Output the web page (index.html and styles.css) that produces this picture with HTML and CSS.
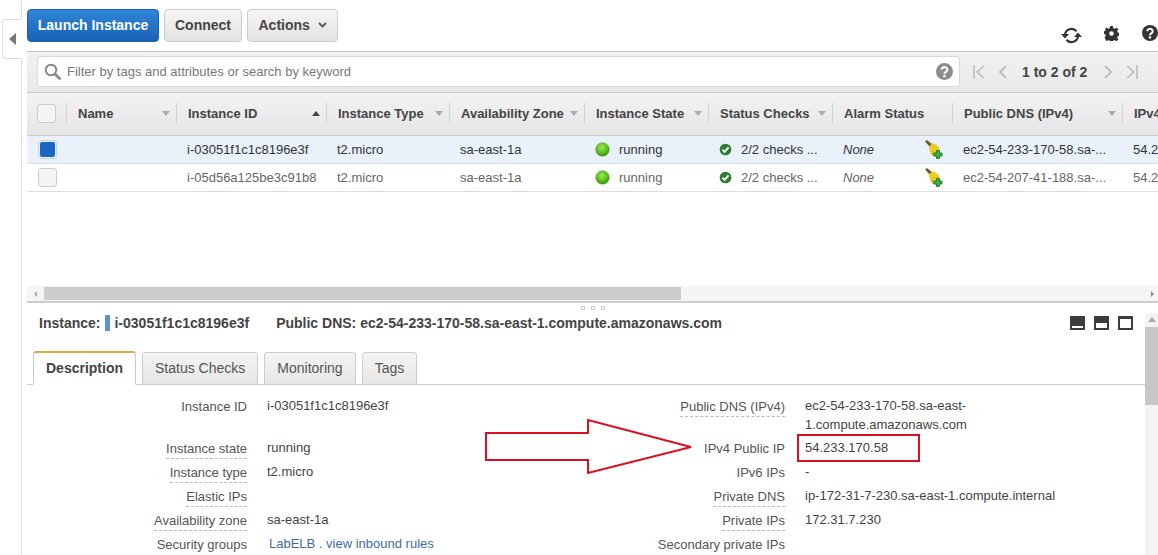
FILE: index.html
```html
<!DOCTYPE html>
<html lang="en">
<head>
    <meta charset="UTF-8">
    <title>EC2 Instances</title>
    <link rel="stylesheet" href="styles.css">
</head>
<body>

<svg class="defs" width="0" height="0">
    <symbol id="i-dot" viewBox="0 0 16 16">
        <defs>
            <radialGradient id="dotFill" cx="45%" cy="35%" r="65%">
                <stop offset="0" stop-color="#9be85a"/>
                <stop offset="0.6" stop-color="#5fc31c"/>
                <stop offset="1" stop-color="#3a8f12"/>
            </radialGradient>
        </defs>
        <circle cx="8" cy="8" r="7.2" fill="url(#dotFill)" stroke="#4d9a2a" stroke-width="0.6"/>
    </symbol>
    <symbol id="i-check" viewBox="0 0 14 14">
        <circle cx="7" cy="7" r="6.3" fill="#2f7d32"/>
        <path d="M3.8 7.2l2.3 2.4 4.2-4.8" fill="none" stroke="#fff" stroke-width="2"/>
    </symbol>
    <symbol id="i-broom" viewBox="0 0 18 20">
        <path d="M0 1.500l2-1.500 5 4-2 3z" fill="#7d5a20"/>
        <path d="M4 6.500l4-3.500 6 4 1 5-3 5-4-1-3-4z" fill="#ecca1e"/>
        <path d="M6.500 13l2 3M8.500 12l2 4" stroke="#bd9a14" stroke-width="1"/>
        <path d="M11.500 10.500h3v2.500h2.500v3h-2.500v2.500h-3v-2.500H9v-3h2.500z" fill="#37b34a" stroke="#0e6b12" stroke-width="0.8"/>
    </symbol>
</svg>

<div class="page">
    <div class="side">
        <div class="side-tab"><span class="tri-left"></span></div>
    </div>

    <div class="main">
        <div class="toolbar">
            <button class="btn btn-primary">Launch Instance</button>
            <button class="btn">Connect</button>
            <button class="btn btn-actions">Actions
                <svg width="9" height="6" viewBox="0 0 9 6"><path d="M1 1l3.500 3.500L8 1" fill="none" stroke="#555" stroke-width="1.800"/></svg>
            </button>
            <div class="top-icons">
                <svg class="ic-refresh" width="21" height="17" viewBox="0 0 21 17">
                    <path d="M4 8a6.500 6.500 0 0 1 11.500-3.800" fill="none" stroke="#333" stroke-width="2.200"/>
                    <path d="M17 9a6.500 6.500 0 0 1-11.500 3.800" fill="none" stroke="#333" stroke-width="2.200"/>
                    <path d="M0 7h8l-4 4.500zM13 10h8l-4-4.500z" fill="#333"/>
                </svg>
                <svg class="ic-gear" width="15" height="15" viewBox="0 0 16 16">
                    <path d="M6.500 0h3l.4 2.300 1.500.6L13.300 1.500l2.100 2.100-1.400 1.900.6 1.500 2.400.5v3l-2.400.4-.6 1.500 1.400 1.900-2.100 2.100-1.900-1.400-1.500.6-.4 2.300h-3l-.4-2.300-1.500-.6-1.900 1.400L.6 12.300 2 10.400l-.6-1.500L-.1 8.500v-3l1.500-.4.6-1.500L.6 3.600 2.700 1.500l1.900 1.400 1.500-.6z" fill="#333"/>
                    <circle cx="8" cy="8" r="2.400" fill="#fff"/>
                </svg>
                <svg class="ic-help" width="16" height="16" viewBox="0 0 16 16">
                    <circle cx="8" cy="8" r="8" fill="#333"/>
                    <path d="M5.300 6.200a2.700 2.400 0 1 1 4.300 2c-1 .7-1.600 1-1.600 2.100" fill="none" stroke="#fff" stroke-width="2"/>
                    <rect x="6.900" y="11.300" width="2.200" height="2.200" fill="#fff"/>
                </svg>
            </div>
        </div>

        <div class="filter-bar">
            <div class="search">
                <svg width="18" height="18" viewBox="0 0 18 18">
                    <circle cx="7" cy="7" r="5.300" fill="none" stroke="#8a8a8a" stroke-width="2"/>
                    <path d="M11 11l5.500 5.500" stroke="#8a8a8a" stroke-width="2.600"/>
                </svg>
                <span class="search-text">Filter by tags and attributes or search by keyword</span>
                <svg class="search-help" width="17" height="17" viewBox="0 0 16 16">
                    <circle cx="8" cy="8" r="8" fill="#8c8c8c"/>
                    <path d="M5.300 6.200a2.700 2.400 0 1 1 4.300 2c-1 .7-1.600 1-1.600 2.100" fill="none" stroke="#fff" stroke-width="2"/>
                    <rect x="6.900" y="11.300" width="2.200" height="2.200" fill="#fff"/>
                </svg>
            </div>
            <div class="pager">
                <svg width="12" height="14" viewBox="0 0 12 14"><path d="M1 0v14M11 1L4 7l7 6" fill="none" stroke="#bbb" stroke-width="1.600"/></svg>
                <svg class="pg-prev" width="9" height="14" viewBox="0 0 9 14"><path d="M8 1L2 7l6 6" fill="none" stroke="#bbb" stroke-width="1.800"/></svg>
                <span class="pg-text">1 to 2 of 2</span>
                <svg class="pg-next" width="9" height="14" viewBox="0 0 9 14"><path d="M1 1l6 6-6 6" fill="none" stroke="#bbb" stroke-width="1.800"/></svg>
                <svg class="pg-last" width="12" height="14" viewBox="0 0 12 14"><path d="M11 0v14M1 1l7 6-7 6" fill="none" stroke="#bbb" stroke-width="1.600"/></svg>
            </div>
        </div>

        <div class="table-wrap">
            <table class="grid">
                <colgroup>
                    <col class="c-check"><col class="c-name"><col class="c-id"><col class="c-type"><col class="c-az">
                    <col class="c-state"><col class="c-status"><col class="c-alarm"><col class="c-dns"><col class="c-ip">
                </colgroup>
                <thead>
                    <tr>
                        <th class="th-check"><span class="check"></span></th>
                        <th><div class="th-in">Name<span class="arrow"></span></div></th>
                        <th><div class="th-in">Instance ID<span class="arrow arrow-up"></span></div></th>
                        <th><div class="th-in">Instance Type<span class="arrow"></span></div></th>
                        <th><div class="th-in">Availability Zone<span class="arrow"></span></div></th>
                        <th><div class="th-in">Instance State<span class="arrow"></span></div></th>
                        <th><div class="th-in">Status Checks<span class="arrow"></span></div></th>
                        <th><div class="th-in">Alarm Status</div></th>
                        <th><div class="th-in">Public DNS (IPv4)<span class="arrow"></span></div></th>
                        <th><div class="th-in">IPv4 Public IP</div></th>
                    </tr>
                </thead>
                <tbody>
                    <tr class="selected">
                        <td class="td-check"><span class="check check-on"></span></td>
                        <td></td>
                        <td>i-03051f1c1c8196e3f</td>
                        <td>t2.micro</td>
                        <td>sa-east-1a</td>
                        <td><div class="cell-icon"><svg class="dot" width="15" height="15"><use href="#i-dot"/></svg>running</div></td>
                        <td><div class="cell-icon"><svg class="tick" width="13" height="13"><use href="#i-check"/></svg>2/2 checks ...</div></td>
                        <td><div class="cell-alarm"><em>None</em><svg width="18" height="20"><use href="#i-broom"/></svg></div></td>
                        <td>ec2-54-233-170-58.sa-...</td>
                        <td>54.233.170.58</td>
                    </tr>
                    <tr>
                        <td class="td-check"><span class="check"></span></td>
                        <td></td>
                        <td>i-05d56a125be3c91b8</td>
                        <td>t2.micro</td>
                        <td>sa-east-1a</td>
                        <td><div class="cell-icon"><svg class="dot" width="15" height="15"><use href="#i-dot"/></svg>running</div></td>
                        <td><div class="cell-icon"><svg class="tick" width="13" height="13"><use href="#i-check"/></svg>2/2 checks ...</div></td>
                        <td><div class="cell-alarm"><em>None</em><svg width="18" height="20"><use href="#i-broom"/></svg></div></td>
                        <td>ec2-54-207-41-188.sa-...</td>
                        <td>54.207.41.188</td>
                    </tr>
                </tbody>
            </table>
        </div>

        <div class="hscroll">
            <span class="tri-small tri-small-left"></span>
            <div class="hscroll-thumb"></div>
            <span class="tri-small tri-small-right"></span>
        </div>

        <div class="lower">
            <div class="lower-body">
                <div class="drag-dots"><i></i><i></i><i></i></div>
                <div class="inst-head">
                    <span>Instance:</span>
                    <span class="inst-mark"></span>
                    <span>i-03051f1c1c8196e3f</span>
                    <span class="inst-dns">Public DNS: ec2-54-233-170-58.sa-east-1.compute.amazonaws.com</span>
                    <div class="panes">
                        <span class="pane pane-s"></span>
                        <span class="pane pane-m"></span>
                        <span class="pane pane-l"></span>
                    </div>
                </div>

                <div class="tabs">
                    <div class="tab tab-on">Description</div>
                    <div class="tab">Status Checks</div>
                    <div class="tab">Monitoring</div>
                    <div class="tab">Tags</div>
                </div>

                <div class="details">
                    <dl class="col col-left">
                        <dt>Instance ID</dt><dd>i-03051f1c1c8196e3f</dd>
                        <dt><span class="dash">Instance state</span></dt><dd>running</dd>
                        <dt><span class="dash">Instance type</span></dt><dd>t2.micro</dd>
                        <dt><span class="dash">Elastic IPs</span></dt><dd></dd>
                        <dt><span class="dash">Availability zone</span></dt><dd>sa-east-1a</dd>
                        <dt>Security groups</dt><dd class="links"><a>LabELB</a> . <a class="inbound">view inbound rules</a></dd>
                    </dl>
                    <dl class="col col-right">
                        <dt><span class="dash">Public DNS (IPv4)</span></dt><dd>ec2-54-233-170-58.sa-east-<br>1.compute.amazonaws.com</dd>
                        <dt>IPv4 Public IP</dt><dd>54.233.170.58</dd>
                        <dt>IPv6 IPs</dt><dd>-</dd>
                        <dt><span class="dash">Private DNS</span></dt><dd>ip-172-31-7-230.sa-east-1.compute.internal</dd>
                        <dt><span class="dash">Private IPs</span></dt><dd>172.31.7.230</dd>
                        <dt>Secondary private IPs</dt><dd></dd>
                    </dl>
                </div>
            </div>
            <div class="vscroll">
                <span class="tri-up"></span>
                <div class="vscroll-thumb"></div>
            </div>
        </div>

        <!-- red annotation drawn over the screenshot -->
        <svg class="note-arrow" width="212" height="57" viewBox="0 0 212 57">
            <path d="M1 14H103V1L206 28 103 54V41H1z" fill="#fff" stroke="#d9101f" stroke-width="2"/>
        </svg>
        <div class="note-box"></div>
    </div>
</div>

</body>
</html>
```

FILE: styles.css
```css
html, body {
    margin: 0;
    height: 100%;
    overflow: hidden;
    background: #fff;
}
body {
    font-family: "Liberation Sans", Arial, sans-serif;
    font-size: 13px;
    color: #444;
}
.defs {
    position: absolute;
}
.page {
    display: flex;
    height: 555px;
}
.side {
    flex: none;
    width: 21px;
    border-right: 1px solid #ddd;
}
.side-tab {
    display: flex;
    align-items: center;
    justify-content: center;
    box-sizing: border-box;
    width: 20px;
    height: 40px;
    margin: 19px -1px 0 2px;
    border: 1px solid #ddd;
    border-right: 1px solid #fff;
    border-radius: 3px 0 0 3px;
    background: #fff;
}
.tri-left {
    border: 6px solid transparent;
    border-left: 0;
    border-right: 7px solid #777;
}
.main {
    flex: 1;
    min-width: 0;
    margin-left: 5px;
    position: relative;
}

/* top buttons */
.toolbar {
    display: flex;
    align-items: flex-start;
    gap: 5px;
    box-sizing: border-box;
    height: 51px;
    padding-top: 9px;
}
.btn {
    box-sizing: border-box;
    height: 33px;
    padding: 0 10px 2px;
    border: 1px solid #ccc;
    border-radius: 4px;
    background: linear-gradient(#f6f6f6, #e2e2e2);
    font-family: inherit;
    font-size: 14px;
    font-weight: bold;
    color: #444;
}
.btn-primary {
    width: 132px;
    padding: 0 0 2px;
    border-color: #1b62b0;
    background: linear-gradient(#2f86d6, #1a62b5);
    color: #fff;
}
.btn-actions {
    padding: 0 10.5px 2px;
}
.btn-actions svg {
    margin-left: 4px;
    vertical-align: 2px;
}
.top-icons {
    display: flex;
    align-items: flex-start;
    margin-left: auto;
    padding-top: 16px;
}
.ic-refresh {
    margin-top: 2px;
}
.ic-gear {
    margin-left: 22px;
    margin-top: 1px;
}
.ic-help {
    margin-left: 23px;
}

/* filter row */
.filter-bar {
    display: flex;
    align-items: flex-start;
    box-sizing: border-box;
    height: 42px;
    padding: 4px 0 0 10px;
    border-top: 1px solid #c9c9c9;
    border-bottom: 1px solid #c9c9c9;
    background: linear-gradient(#f1f1f1, #e9e9e9);
}
.search {
    display: flex;
    align-items: center;
    box-sizing: border-box;
    width: 923px;
    height: 31px;
    padding: 0 6px;
    border: 1px solid #d8d8d8;
    border-radius: 3px;
    background: #fff;
}
.search-text {
    margin-left: 5px;
    color: #777;
}
.search-help {
    margin-left: auto;
}
.pager {
    display: flex;
    align-items: center;
    height: 31px;
    margin-left: 13px;
}
.pg-prev {
    margin-left: 13px;
}
.pg-text {
    margin: 0 17px 0 15px;
    font-size: 14px;
    font-weight: bold;
}
.pg-next {
    margin-right: 13px;
}

/* instances table */
.table-wrap {
    height: 193px;
    overflow: hidden;
}
.grid {
    table-layout: fixed;
    width: 1195px;
    border-collapse: collapse;
}
.c-check { width: 39px; }
.c-name { width: 110px; }
.c-id { width: 150px; }
.c-type { width: 123px; }
.c-az { width: 135px; }
.c-state { width: 124px; }
.c-status { width: 124px; }
.c-alarm { width: 120px; }
.c-dns { width: 170px; }
.c-ip { width: 100px; }
.grid th {
    height: 40px;
    padding: 0 0 2px;
    border-bottom: 1px solid #ccc;
    background: linear-gradient(#f3f3f3, #e5e5e5);
    font-size: 13px;
    text-align: left;
    white-space: nowrap;
}
.th-in {
    display: flex;
    align-items: center;
    justify-content: space-between;
    height: 20px;
    padding: 0 6px 0 11px;
    border-left: 1px solid #d0d0d0;
}
.arrow {
    border: 4px solid transparent;
    border-top: 5px solid #aaa;
    border-bottom: 0;
}
.arrow-up {
    border-top: 0;
    border-bottom: 5px solid #444;
}
.grid td {
    height: 27px;
    padding: 0 0 0 11px;
    border-bottom: 1px solid #ddd;
    color: #666;
    white-space: nowrap;
    overflow: hidden;
}
.grid .selected td {
    background: #e9f1fb;
    color: #333;
}
.grid .th-check {
    padding: 0 0 2px 10px;
}
.check {
    display: block;
    box-sizing: border-box;
    width: 19px;
    height: 19px;
    border: 1px solid #ccc;
    border-radius: 3px;
    background: #f4f4f4;
}
.check-on {
    border: 2px solid #e9f1fb;
    outline: 1px solid #c9d3df;
    outline-offset: -1px;
    border-radius: 4px;
    background: #1a66c2;
}
.cell-icon {
    display: flex;
    align-items: center;
}
.dot {
    margin-right: 9px;
}
.tick {
    margin-right: 9px;
}
.cell-alarm {
    display: flex;
    align-items: center;
    justify-content: space-between;
    padding-right: 9px;
}

/* scrollbar under the table */
.hscroll {
    display: flex;
    align-items: center;
    box-sizing: border-box;
    height: 17px;
    padding: 0 4px 0 7px;
    border-bottom: 2px solid #ccc;
    background: #f5f5f5;
}
.hscroll-thumb {
    width: 637px;
    height: 13px;
    margin-left: 7px;
    background: #cdcdcd;
}
.tri-small {
    border: 3px solid transparent;
}
.tri-small-left {
    border-left: 0;
    border-right: 3px solid #aaa;
}
.tri-small-right {
    margin-left: auto;
    border-right: 0;
    border-left: 3px solid #888;
}

/* lower pane */
.lower {
    display: flex;
    height: 253px;
    overflow: hidden;
}
.lower-body {
    flex: 1;
    min-width: 0;
}
.drag-dots {
    display: flex;
    justify-content: center;
    gap: 6px;
    height: 4px;
    padding: 3px 0 0 13px;
}
.drag-dots i {
    box-sizing: border-box;
    width: 4px;
    height: 4px;
    border: 1px solid #ccc;
}
.inst-head {
    display: flex;
    align-items: center;
    height: 16px;
    padding: 5px 12px 0 12px;
    font-size: 14px;
    font-weight: bold;
}
.inst-mark {
    width: 5px;
    height: 16px;
    margin: 0 4px 0 5px;
    background: #5b95c9;
}
.inst-dns {
    margin-left: 27px;
}
.panes {
    display: flex;
    gap: 9px;
    margin-left: auto;
    margin-top: -1px;
}
.pane {
    box-sizing: border-box;
    width: 15px;
    height: 14px;
    border: 2px solid #3c3c3c;
    background: #fff;
}
.pane-s { border-top-width: 10px; }
.pane-m { border-top-width: 7px; }
.pane-l { border-top-width: 3px; }
.tabs {
    display: flex;
    align-items: flex-end;
    gap: 6px;
    box-sizing: border-box;
    height: 35px;
    margin-top: 19px;
    padding-left: 6px;
    border-bottom: 1px solid #ccc;
}
.tab {
    box-sizing: border-box;
    height: 33px;
    margin-bottom: -1px;
    padding: 0 12px;
    border: 1px solid #ccc;
    border-radius: 3px 3px 0 0;
    background: linear-gradient(#f4f4f4, #e6e6e6);
    font-size: 14px;
    line-height: 31px;
    color: #555;
}
.tab-on {
    height: 34px;
    border-top: 2px solid #e5a640;
    border-bottom-color: #fff;
    background: #fff;
    font-weight: bold;
    color: #444;
}
.details {
    display: flex;
    padding-top: 12px;
}
.col {
    display: grid;
    grid-template-rows: 42px repeat(5, 24px);
    column-gap: 20px;
    margin: 0;
}
.col-left {
    grid-template-columns: 220px 1fr;
    width: 520px;
}
.col-right {
    grid-template-columns: 238px 1fr;
}
.col dt {
    text-align: right;
    line-height: 19px;
    color: #555;
}
.col dd {
    margin: -1px 0 0;
    line-height: 19px;
    white-space: nowrap;
}
.dash {
    display: inline-block;
    height: 19px;
    border-bottom: 1px dashed #bbb;
}
.links {
    padding-left: 2px;
    color: #3f6aa5;
}
.inbound {
    margin-left: 0;
}
.vscroll {
    display: flex;
    flex-direction: column;
    align-items: center;
    flex: none;
    width: 13px;
    margin-top: 10px;
    background: #f3f3f3;
}
.tri-up {
    margin-top: 4px;
    border: 4px solid transparent;
    border-top: 0;
    border-bottom: 5px solid #aaa;
}
.vscroll-thumb {
    align-self: stretch;
    height: 78px;
    margin-top: 5px;
    background: #c6c6c6;
}

/* annotation */
.note-arrow {
    position: absolute;
    left: 458px;
    top: 419px;
}
.note-box {
    position: absolute;
    left: 770px;
    top: 434px;
    box-sizing: border-box;
    width: 123px;
    height: 28px;
    border: 2px solid #d9101f;
}
```
